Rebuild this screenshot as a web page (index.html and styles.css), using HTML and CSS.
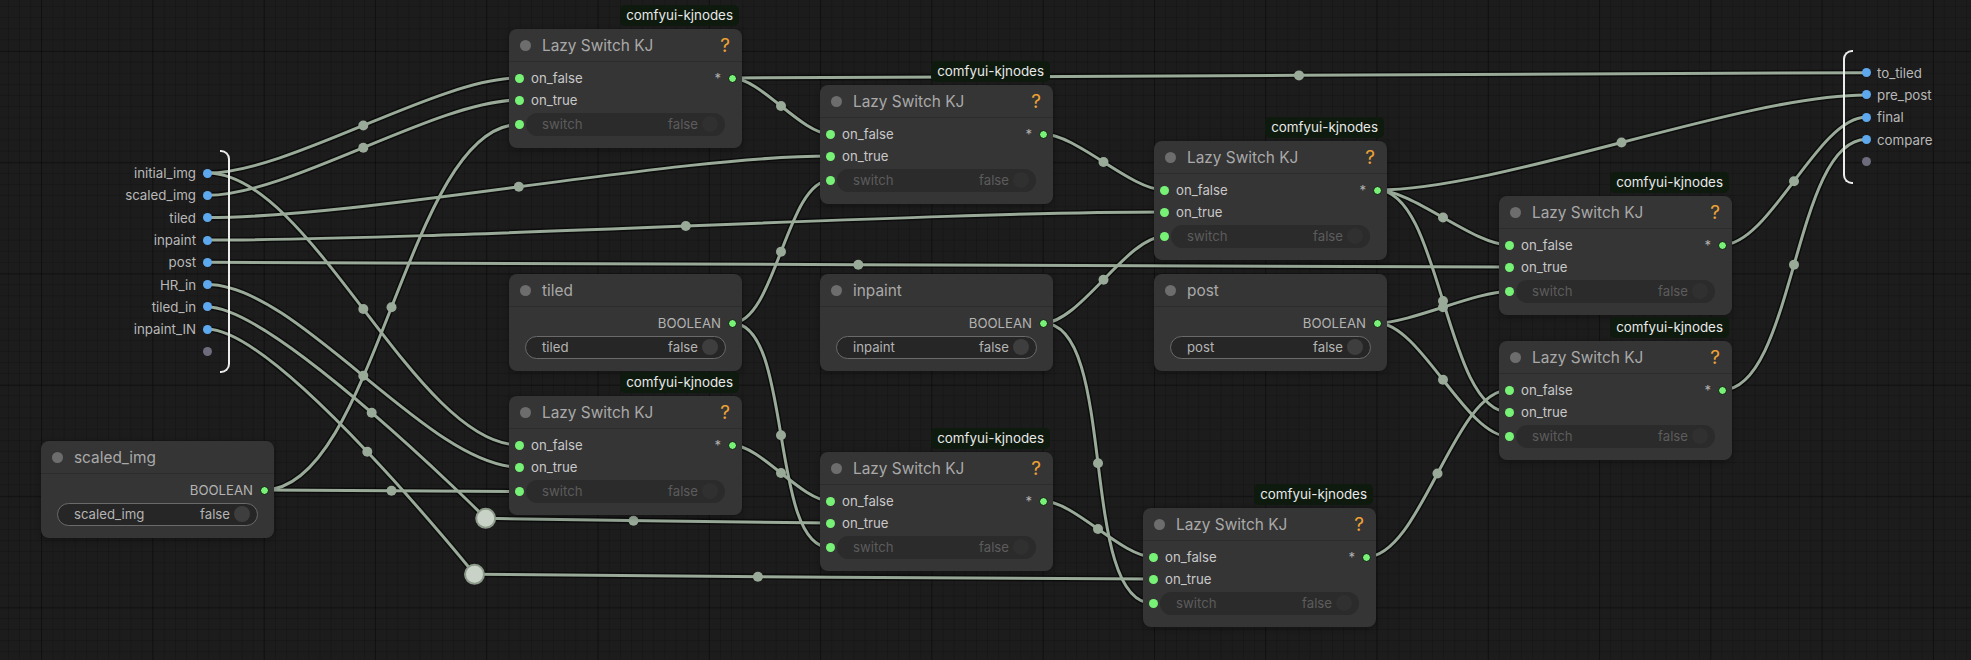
FILE: index.html
```html
<!DOCTYPE html>
<html lang="en">
<head>
  <meta charset="UTF-8">
  <title>Lazy Switch graph</title>
  <link rel="stylesheet" href="styles.css">
</head>
<body>

<div class="canvas">

  <!-- links are drawn first so the nodes sit on top of them -->
  <svg class="links" width="1971" height="660" viewBox="0 0 1971 660">
    <defs>
      <path id="p1" d="M207.5 173 C289 173 437.6 78 519 78"/>
      <path id="p2" d="M207.5 195.3 C289 195.3 437.6 100 519 100"/>
      <path id="p3" d="M207.5 173 C311 173 415.6 445 519 445"/>
      <path id="p4" d="M207.5 217.6 C364 217.6 673.6 156 830 156"/>
      <path id="p5" d="M207.5 240 C446.7 240 924.8 212 1164 212"/>
      <path id="p6" d="M207.5 262.3 C533 262.3 1183.6 267 1509 267"/>
      <path id="p7" d="M207.5 284.6 C297.7 284.6 428.8 467 519 467"/>
      <path id="p8" d="M207.5 307 C274.5 307 485.7 518.3 485.7 518.3"/>
      <path id="p9" d="M207.5 329.3 C277.5 329.3 474.5 574.3 474.5 574.3"/>
      <path id="p10" d="M485.7 518.3 C485.7 518.3 765 523 830 523"/>
      <path id="p11" d="M474.5 574.3 C474.5 574.3 1004 579 1153 579"/>
      <path id="p12" d="M264 490 C375.4 490 407.6 124.5 519 124.5"/>
      <path id="p13" d="M264 490 C327.8 490 455.3 491.5 519 491.5"/>
      <path id="p14" d="M732 323 C775.2 323 786.8 180.5 830 180.5"/>
      <path id="p15" d="M732 323 C793.2 323 768.8 547.5 830 547.5"/>
      <path id="p16" d="M1043 323 C1080.2 323 1126.8 236.5 1164 236.5"/>
      <path id="p17" d="M1043 323 C1118.3 323 1077.7 603.5 1153 603.5"/>
      <path id="p18" d="M1377 323 C1410.9 323 1475.1 291.5 1509 291.5"/>
      <path id="p19" d="M1377 323 C1420.5 323 1465.5 436.5 1509 436.5"/>
      <path id="p20" d="M732 78 C1015.5 78 1582.5 72.7 1866 72.7"/>
      <path id="p21" d="M732 78 C760.2 78 801.8 134 830 134"/>
      <path id="p22" d="M1043 134 C1076.3 134 1130.7 190 1164 190"/>
      <path id="p23" d="M1377 190 C1501.5 190 1741.5 95 1866 95"/>
      <path id="p24" d="M1377 190 C1412.8 190 1473.3 245 1509 245"/>
      <path id="p25" d="M1377 190 C1441.6 190 1444.4 412 1509 412"/>
      <path id="p26" d="M732 445 C760.2 445 801.8 501 830 501"/>
      <path id="p27" d="M1043 501 C1073.9 501 1122.1 557 1153 557"/>
      <path id="p28" d="M1366 557 C1421 557 1454 390 1509 390"/>
      <path id="p29" d="M1722 245 C1770.1 245 1817.9 117.3 1866 117.3"/>
      <path id="p30" d="M1722 390 C1794.2 390 1793.8 139.6 1866 139.6"/>
    </defs>

    <g class="wire-border">
      <use href="#p1"/><use href="#p2"/><use href="#p3"/><use href="#p4"/><use href="#p5"/>
      <use href="#p6"/><use href="#p7"/><use href="#p8"/><use href="#p9"/><use href="#p10"/>
      <use href="#p11"/><use href="#p12"/><use href="#p13"/><use href="#p14"/><use href="#p15"/>
      <use href="#p16"/><use href="#p17"/><use href="#p18"/><use href="#p19"/><use href="#p20"/>
      <use href="#p21"/><use href="#p22"/><use href="#p23"/><use href="#p24"/><use href="#p25"/>
      <use href="#p26"/><use href="#p27"/><use href="#p28"/><use href="#p29"/><use href="#p30"/>
    </g>
    <g class="wire">
      <use href="#p1"/><use href="#p2"/><use href="#p3"/><use href="#p4"/><use href="#p5"/>
      <use href="#p6"/><use href="#p7"/><use href="#p8"/><use href="#p9"/><use href="#p10"/>
      <use href="#p11"/><use href="#p12"/><use href="#p13"/><use href="#p14"/><use href="#p15"/>
      <use href="#p16"/><use href="#p17"/><use href="#p18"/><use href="#p19"/><use href="#p20"/>
      <use href="#p21"/><use href="#p22"/><use href="#p23"/><use href="#p24"/><use href="#p25"/>
      <use href="#p26"/><use href="#p27"/><use href="#p28"/><use href="#p29"/><use href="#p30"/>
    </g>

    <!-- link centre markers -->
    <g class="link-mid">
      <circle cx="363.3" cy="125.5" r="5"/>
      <circle cx="363.3" cy="147.7" r="5"/>
      <circle cx="363.3" cy="309" r="5"/>
      <circle cx="518.8" cy="186.8" r="5"/>
      <circle cx="685.8" cy="226" r="5"/>
      <circle cx="858.3" cy="264.7" r="5"/>
      <circle cx="363.3" cy="375.8" r="5"/>
      <circle cx="371.7" cy="412.7" r="5"/>
      <circle cx="367.3" cy="451.8" r="5"/>
      <circle cx="633.5" cy="520.7" r="5"/>
      <circle cx="757.9" cy="576.7" r="5"/>
      <circle cx="391.5" cy="307.3" r="5"/>
      <circle cx="391.5" cy="490.8" r="5"/>
      <circle cx="781" cy="251.8" r="5"/>
      <circle cx="781" cy="435.3" r="5"/>
      <circle cx="1103.5" cy="279.8" r="5"/>
      <circle cx="1098" cy="463.3" r="5"/>
      <circle cx="1443" cy="307.3" r="5"/>
      <circle cx="1443" cy="379.8" r="5"/>
      <circle cx="1299" cy="75.4" r="5"/>
      <circle cx="781" cy="106" r="5"/>
      <circle cx="1103.5" cy="162" r="5"/>
      <circle cx="1621.5" cy="142.5" r="5"/>
      <circle cx="1443" cy="217.5" r="5"/>
      <circle cx="1443" cy="301" r="5"/>
      <circle cx="781" cy="473" r="5"/>
      <circle cx="1098" cy="529" r="5"/>
      <circle cx="1437.5" cy="473.5" r="5"/>
      <circle cx="1794" cy="181.2" r="5"/>
      <circle cx="1794" cy="264.8" r="5"/>
    </g>

    <!-- native reroute points -->
    <circle class="reroute" cx="485.7" cy="518.3" r="9.5"/>
    <circle class="reroute" cx="474.5" cy="574.3" r="9.5"/>
  </svg>

  <!-- subgraph inputs -->
  <div class="bracket bracket-in"></div>
  <div class="io io-in">
    <div class="io-row"><span>initial_img</span><span class="io-dot"></span></div>
    <div class="io-row"><span>scaled_img</span><span class="io-dot"></span></div>
    <div class="io-row"><span>tiled</span><span class="io-dot"></span></div>
    <div class="io-row"><span>inpaint</span><span class="io-dot"></span></div>
    <div class="io-row"><span>post</span><span class="io-dot"></span></div>
    <div class="io-row"><span>HR_in</span><span class="io-dot"></span></div>
    <div class="io-row"><span>tiled_in</span><span class="io-dot"></span></div>
    <div class="io-row"><span>inpaint_IN</span><span class="io-dot"></span></div>
    <div class="io-row"><span class="io-dot empty"></span></div>
  </div>

  <!-- subgraph outputs -->
  <div class="bracket bracket-out"></div>
  <div class="io io-out">
    <div class="io-row"><span class="io-dot"></span><span>to_tiled</span></div>
    <div class="io-row"><span class="io-dot"></span><span>pre_post</span></div>
    <div class="io-row"><span class="io-dot"></span><span>final</span></div>
    <div class="io-row"><span class="io-dot"></span><span>compare</span></div>
    <div class="io-row"><span class="io-dot empty"></span></div>
  </div>

  <!-- boolean primitives -->
  <div class="node n-scaled">
    <div class="title"><span class="state"></span><span class="name">scaled_img</span></div>
    <div class="body">
      <div class="slot right"><span class="out-label">BOOLEAN</span><span class="out"></span></div>
      <div class="pill on"><span>scaled_img</span><span class="val">false</span><span class="knob"></span></div>
    </div>
  </div>

  <div class="node n-tiled">
    <div class="title"><span class="state"></span><span class="name">tiled</span></div>
    <div class="body">
      <div class="slot right"><span class="out-label">BOOLEAN</span><span class="out"></span></div>
      <div class="pill on"><span>tiled</span><span class="val">false</span><span class="knob"></span></div>
    </div>
  </div>

  <div class="node n-inpaint">
    <div class="title"><span class="state"></span><span class="name">inpaint</span></div>
    <div class="body">
      <div class="slot right"><span class="out-label">BOOLEAN</span><span class="out"></span></div>
      <div class="pill on"><span>inpaint</span><span class="val">false</span><span class="knob"></span></div>
    </div>
  </div>

  <div class="node n-post">
    <div class="title"><span class="state"></span><span class="name">post</span></div>
    <div class="body">
      <div class="slot right"><span class="out-label">BOOLEAN</span><span class="out"></span></div>
      <div class="pill on"><span>post</span><span class="val">false</span><span class="knob"></span></div>
    </div>
  </div>

  <!-- Lazy Switch KJ nodes -->
  <div class="node n-l1">
    <div class="badge">comfyui-kjnodes</div>
    <div class="title"><span class="state"></span><span class="name">Lazy Switch KJ</span><span class="help">?</span></div>
    <div class="body">
      <div class="slot"><span class="in"></span><span class="label">on_false</span><span class="out-label">*</span><span class="out"></span></div>
      <div class="slot"><span class="in"></span><span class="label">on_true</span></div>
      <div class="widget-row"><span class="in"></span><div class="pill off"><span>switch</span><span class="val">false</span><span class="knob"></span></div></div>
    </div>
  </div>

  <div class="node n-l2">
    <div class="badge">comfyui-kjnodes</div>
    <div class="title"><span class="state"></span><span class="name">Lazy Switch KJ</span><span class="help">?</span></div>
    <div class="body">
      <div class="slot"><span class="in"></span><span class="label">on_false</span><span class="out-label">*</span><span class="out"></span></div>
      <div class="slot"><span class="in"></span><span class="label">on_true</span></div>
      <div class="widget-row"><span class="in"></span><div class="pill off"><span>switch</span><span class="val">false</span><span class="knob"></span></div></div>
    </div>
  </div>

  <div class="node n-l3">
    <div class="badge">comfyui-kjnodes</div>
    <div class="title"><span class="state"></span><span class="name">Lazy Switch KJ</span><span class="help">?</span></div>
    <div class="body">
      <div class="slot"><span class="in"></span><span class="label">on_false</span><span class="out-label">*</span><span class="out"></span></div>
      <div class="slot"><span class="in"></span><span class="label">on_true</span></div>
      <div class="widget-row"><span class="in"></span><div class="pill off"><span>switch</span><span class="val">false</span><span class="knob"></span></div></div>
    </div>
  </div>

  <div class="node n-l4">
    <div class="badge">comfyui-kjnodes</div>
    <div class="title"><span class="state"></span><span class="name">Lazy Switch KJ</span><span class="help">?</span></div>
    <div class="body">
      <div class="slot"><span class="in"></span><span class="label">on_false</span><span class="out-label">*</span><span class="out"></span></div>
      <div class="slot"><span class="in"></span><span class="label">on_true</span></div>
      <div class="widget-row"><span class="in"></span><div class="pill off"><span>switch</span><span class="val">false</span><span class="knob"></span></div></div>
    </div>
  </div>

  <div class="node n-l5">
    <div class="badge">comfyui-kjnodes</div>
    <div class="title"><span class="state"></span><span class="name">Lazy Switch KJ</span><span class="help">?</span></div>
    <div class="body">
      <div class="slot"><span class="in"></span><span class="label">on_false</span><span class="out-label">*</span><span class="out"></span></div>
      <div class="slot"><span class="in"></span><span class="label">on_true</span></div>
      <div class="widget-row"><span class="in"></span><div class="pill off"><span>switch</span><span class="val">false</span><span class="knob"></span></div></div>
    </div>
  </div>

  <div class="node n-l6">
    <div class="badge">comfyui-kjnodes</div>
    <div class="title"><span class="state"></span><span class="name">Lazy Switch KJ</span><span class="help">?</span></div>
    <div class="body">
      <div class="slot"><span class="in"></span><span class="label">on_false</span><span class="out-label">*</span><span class="out"></span></div>
      <div class="slot"><span class="in"></span><span class="label">on_true</span></div>
      <div class="widget-row"><span class="in"></span><div class="pill off"><span>switch</span><span class="val">false</span><span class="knob"></span></div></div>
    </div>
  </div>

  <div class="node n-l7">
    <div class="badge">comfyui-kjnodes</div>
    <div class="title"><span class="state"></span><span class="name">Lazy Switch KJ</span><span class="help">?</span></div>
    <div class="body">
      <div class="slot"><span class="in"></span><span class="label">on_false</span><span class="out-label">*</span><span class="out"></span></div>
      <div class="slot"><span class="in"></span><span class="label">on_true</span></div>
      <div class="widget-row"><span class="in"></span><div class="pill off"><span>switch</span><span class="val">false</span><span class="knob"></span></div></div>
    </div>
  </div>

  <div class="node n-l8">
    <div class="badge">comfyui-kjnodes</div>
    <div class="title"><span class="state"></span><span class="name">Lazy Switch KJ</span><span class="help">?</span></div>
    <div class="body">
      <div class="slot"><span class="in"></span><span class="label">on_false</span><span class="out-label">*</span><span class="out"></span></div>
      <div class="slot"><span class="in"></span><span class="label">on_true</span></div>
      <div class="widget-row"><span class="in"></span><div class="pill off"><span>switch</span><span class="val">false</span><span class="knob"></span></div></div>
    </div>
  </div>

</div>

</body>
</html>
```

FILE: styles.css
```css
body {
  margin: 0;
  padding: 0;
  background: #1c1c1c;
  font-family: Inter, "Noto Sans", sans-serif;
}

.canvas {
  position: relative;
  width: 1971px;
  height: 660px;
  overflow: hidden;
  background-color: #1c1c1c;
  background-image:
    linear-gradient(90deg, rgba(0, 0, 0, 0.32) 1px, transparent 1px),
    linear-gradient(180deg, rgba(0, 0, 0, 0.32) 1px, transparent 1px),
    linear-gradient(90deg, rgba(0, 0, 0, 0.16) 1px, transparent 1px),
    linear-gradient(180deg, rgba(0, 0, 0, 0.16) 1px, transparent 1px);
  background-size: 111.3px 111.3px, 111.3px 111.3px, 11.13px 11.13px, 11.13px 11.13px;
  background-position: 41px 0, 0 51px, 8px 0, 0 6px;
}

/* links */
.links {
  position: absolute;
  left: 0;
  top: 0;
}

.wire-border use {
  fill: none;
  stroke: rgba(0, 0, 0, 0.55);
  stroke-width: 6;
}

.wire use {
  fill: none;
  stroke: #99aa99;
  stroke-width: 3;
}

.link-mid circle {
  fill: #99aa99;
}

.reroute {
  fill: #c9d2c7;
  stroke: #8c9a8a;
  stroke-width: 2;
}

/* subgraph inputs / outputs */
.bracket {
  position: absolute;
  width: 8px;
  border: 2px solid #ececec;
}

.bracket-in {
  left: 220px;
  top: 150px;
  height: 219px;
  border-left: none;
  border-radius: 0 9px 9px 0;
}

.bracket-out {
  left: 1843px;
  top: 50px;
  height: 130px;
  border-right: none;
  border-radius: 9px 0 0 9px;
}

.io {
  position: absolute;
  display: flex;
  flex-direction: column;
  font-size: 13.3px;
  color: #b8b8b8;
}

.io-row {
  height: 22.3px;
  display: flex;
  align-items: center;
}

.io-in {
  left: 0;
  top: 162px;
  width: 212px;
}

.io-in .io-row {
  justify-content: flex-end;
  gap: 7px;
}

.io-out {
  left: 1861.5px;
  top: 61.5px;
}

.io-out .io-row {
  gap: 6.5px;
}

.io-dot {
  width: 9px;
  height: 9px;
  border-radius: 50%;
  background: #5ea9ee;
}

.io-dot.empty {
  background: #6c6c7c;
}

/* nodes */
.node {
  position: absolute;
  width: 233px;
  background: #353535;
  border-radius: 8px;
  box-shadow: 0 2px 6px rgba(0, 0, 0, 0.3);
}

.n-l1 { left: 509px; top: 29px; }
.n-l2 { left: 820px; top: 85px; }
.n-l3 { left: 1154px; top: 141px; }
.n-l4 { left: 509px; top: 396px; }
.n-l5 { left: 820px; top: 452px; }
.n-l6 { left: 1143px; top: 508px; }
.n-l7 { left: 1499px; top: 196px; }
.n-l8 { left: 1499px; top: 341px; }
.n-tiled { left: 509px; top: 274px; }
.n-inpaint { left: 820px; top: 274px; }
.n-post { left: 1154px; top: 274px; }
.n-scaled { left: 41px; top: 441px; }

.badge {
  position: absolute;
  right: 3px;
  bottom: calc(100% + 3px);
  height: 21px;
  padding: 0 6px;
  line-height: 21px;
  font-size: 13.4px;
  color: #e8e8e8;
  background: #0e1a0e;
  border-radius: 5px;
  white-space: nowrap;
}

.title {
  box-sizing: border-box;
  height: 33px;
  display: flex;
  align-items: center;
  padding: 0 12px 0 11px;
  border-bottom: 1px solid #2c2c2c;
  font-size: 15.4px;
  color: #a9a9a9;
}

.state {
  width: 11px;
  height: 11px;
  border-radius: 50%;
  background: #6d6d6d;
}

.name {
  margin-left: 11px;
}

.help {
  margin-left: auto;
  font-size: 19px;
  color: #eea236;
}

.body {
  padding: 5px 0 12.5px;
}

.slot {
  height: 22px;
  display: flex;
  align-items: center;
  font-size: 13.2px;
  color: #c8c8c8;
}

.slot.right {
  justify-content: flex-end;
}

.in {
  flex: none;
  width: 9px;
  height: 9px;
  margin-left: 5.5px;
  border-radius: 50%;
  background: #77f277;
}

.label {
  margin-left: 7.5px;
}

.out-label {
  margin-left: auto;
  margin-right: 7px;
  color: #b3b3b3;
}

.out {
  flex: none;
  width: 7px;
  height: 7px;
  margin-right: 5px;
  border: 1.5px solid #111;
  border-radius: 50%;
  background: #77f277;
}

.widget-row {
  height: 22.5px;
  margin-top: 2px;
  display: flex;
  align-items: center;
}

.pill {
  box-sizing: border-box;
  height: 22.5px;
  display: flex;
  align-items: center;
  padding: 0 7px 0 16px;
  border-radius: 12px;
  font-size: 13.2px;
}

.pill .val {
  margin-left: auto;
}

.pill .knob {
  width: 16px;
  height: 16px;
  margin-left: 4px;
  border-radius: 50%;
}

.pill.off {
  flex: 1;
  margin: 0 17px 0 2.5px;
  background: #2b2b2b;
  color: #5c5c5c;
}

.pill.off .knob {
  background: #303030;
}

.pill.on {
  margin: 2px 16px 0;
  border: 1.5px solid #6a6a6a;
  background: #262626;
  color: #b4b4b4;
}

.pill.on .knob {
  background: #3e3e3e;
}
```
